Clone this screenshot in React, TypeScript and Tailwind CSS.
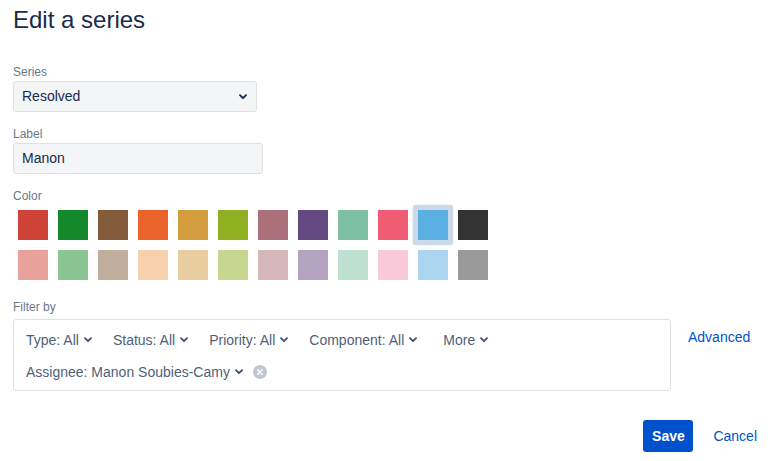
import React from "react";

const topColors = [
  "#D04437", "#14892C", "#815B3A", "#EA632B", "#D39C3F", "#8EB021",
  "#AC707A", "#654982", "#7EC0A2", "#F15C75", "#59AFE1", "#333333",
];
const bottomColors = [
  "#E8A29B", "#8AC593", "#C0AD9C", "#F7D0AD", "#E9CD9E", "#C7D78F",
  "#D6B7BB", "#B2A3C1", "#BDE0D0", "#F9C8D9", "#ACD6EF", "#999999",
];

const Chevron = ({ className = "" }: { className?: string }) => (
  <svg width="8" height="6" viewBox="0 0 8 6" className={className}>
    <path d="M1 1.2 L4 4.2 L7 1.2" fill="none" stroke="currentColor" strokeWidth="1.9" strokeLinecap="round" strokeLinejoin="round" />
  </svg>
);

const FilterItem = ({ text, className = "" }: { text: string; className?: string }) => (
  <span className={"flex items-center text-[#505F79] " + className}>
    <span>{text}</span>
    <Chevron className="ml-[5px] text-[#42526E]" />
  </span>
);

const Swatch = ({ color, selected }: { color: string; selected?: boolean }) => (
  <div
    className={
      "w-[40px] h-[40px] flex items-center justify-center rounded-[3px] " +
      (selected ? "bg-[#CCD9EA] shadow-[0_0_2px_rgba(9,30,66,0.15)]" : "")
    }
  >
    <div className="w-[30px] h-[30px]" style={{ backgroundColor: color }} />
  </div>
);

export default function App() {
  return (
    <div className="min-h-screen bg-white pl-[13px] pt-[6px] font-['Liberation_Sans',Arial,sans-serif] text-[#172B4D]">
      <h1 className="text-[24px] leading-[28px]">Edit a series</h1>

      {/* series */}
      <div className="mt-[30px] text-[12px] leading-[16px] text-[#6B778C] mb-[1px]">Series</div>
      <div className="w-[244px] h-[31px] flex items-center justify-between px-[8px] bg-[#F4F5F7] border border-[#DFE1E6] rounded-[3px] text-[14px]">
        <span>Resolved</span>
        <Chevron className="mr-[1px]" />
      </div>

      {/* label */}
      <div className="mt-[14px] text-[12px] leading-[16px] text-[#6B778C] mb-[1px]">Label</div>
      <div className="w-[250px] h-[31px] flex items-center px-[8px] bg-[#F4F5F7] border border-[#DFE1E6] rounded-[3px] text-[14px]">
        Manon
      </div>

      {/* colours */}
      <div className="mt-[14px] text-[12px] leading-[16px] text-[#6B778C] mb-[1px]">Color</div>
      <div className="flex">
        {topColors.map((c, i) => (
          <Swatch key={c} color={c} selected={i === 10} />
        ))}
      </div>
      <div className="flex">
        {bottomColors.map((c) => (
          <Swatch key={c} color={c} />
        ))}
      </div>

      {/* filter */}
      <div className="mt-[14px] text-[12px] leading-[16px] text-[#6B778C] mb-[4px]">Filter by</div>
      <div className="flex items-start">
        <div className="w-[658px] h-[72px] border border-[#DFE1E6] rounded-[3px] pl-[12px] pt-[10px] text-[14px] leading-[20px]">
          <div className="flex items-center gap-x-[21px]">
            <FilterItem text="Type: All" />
            <FilterItem text="Status: All" />
            <FilterItem text="Priority: All" />
            <FilterItem text="Component: All" />
            <FilterItem text="More" className="ml-[5px]" />
          </div>
          <div className="flex items-center mt-[12px]">
            <FilterItem text="Assignee: Manon Soubies-Camy" />
            <span className="ml-[10px] w-[14px] h-[14px] rounded-full bg-[#C1C7D0] flex items-center justify-center">
              <svg width="6" height="6" viewBox="0 0 6 6">
                <path d="M0.8 0.8 L5.2 5.2 M5.2 0.8 L0.8 5.2" stroke="white" strokeWidth="1.5" strokeLinecap="round" />
              </svg>
            </span>
          </div>
        </div>
        <a className="ml-[17px] mt-[8px] text-[14px] leading-[20px] text-[#0052CC]">Advanced</a>
      </div>

      {/* actions */}
      <div className="mt-[29px] flex justify-end items-center pr-[18px] text-[14px]">
        <button className="w-[50px] h-[32px] rounded-[3px] bg-[#0052CC] text-white font-bold">Save</button>
        <a className="ml-[20px] text-[#0052CC]">Cancel</a>
      </div>
    </div>
  );
}
